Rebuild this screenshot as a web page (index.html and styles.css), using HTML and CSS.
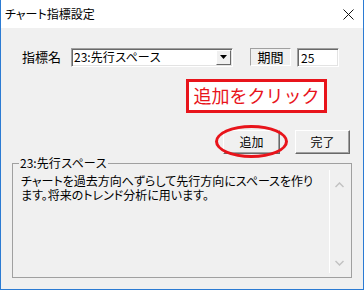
FILE: index.html
```html
<!DOCTYPE html>
<html lang="ja">
<head>
  <meta charset="UTF-8">
  <title>チャート指標設定</title>
  <link rel="stylesheet" href="styles.css">
</head>
<body>
  <div class="window">
    <div class="titlebar">
      <span class="title">チャート指標設定</span>
      <svg class="close" width="11" height="11" viewBox="0 0 11 11">
        <path d="M0.5 0.5 L10.5 10.5 M10.5 0.5 L0.5 10.5" stroke="#111" stroke-width="1" fill="none"/>
      </svg>
    </div>
    <div class="dialog">
      <div class="row-top">
        <span class="label">指標名</span>
        <div class="combo">
          <span class="combo-text">23:先行スペース</span>
          <span class="combo-btn">
            <svg width="7" height="4" viewBox="0 0 7 4"><path d="M0 0 H7 L3.5 4 Z" fill="#000"/></svg>
          </span>
        </div>
        <span class="period-label">期間</span>
        <div class="period-input">25</div>
      </div>
      <div class="callout-row">
        <div class="callout">追加をクリック</div>
      </div>
      <div class="button-row">
        <button class="btn btn-add">追加<span class="ring"></span></button>
        <button class="btn btn-done">完了</button>
      </div>
      <div class="group">
        <span class="group-title">23:先行スペース</span>
        <div class="memo">
          <p class="memo-text">チャートを過去方向へずらして先行方向にスペースを作り<br>ます。将来のトレンド分析に用います。</p>
          <div class="scrollbar">
            <svg width="9" height="6" viewBox="0 0 9 6"><path d="M0.5 5 L4.5 1 L8.5 5" stroke="#c2c2c2" stroke-width="1.5" fill="none"/></svg>
            <svg width="9" height="6" viewBox="0 0 9 6"><path d="M0.5 1 L4.5 5 L8.5 1" stroke="#c2c2c2" stroke-width="1.5" fill="none"/></svg>
          </div>
        </div>
      </div>
    </div>
  </div>
</body>
</html>
```

FILE: styles.css
```css
body {
  margin: 0;
  font-family: "Noto Sans CJK JP", "Noto Sans", sans-serif;
  color: #000;
}
.window {
  width: 364px;
  height: 290px;
  box-sizing: border-box;
  border: 1px solid #2b7bd3;
  border-top: none;
  background-color: #f0f0f0;
  display: flex;
  flex-direction: column;
}
.titlebar {
  height: 28px;
  background-color: #fff;
  display: flex;
  align-items: center;
  justify-content: space-between;
  padding: 0 9px 0 4px;
}
.title {
  font-size: 12px;
  line-height: 14px;
  font-feature-settings: "palt";
}
.close {
  display: block;
}
.dialog {
  padding: 19px 11px 0 11px;
}
.row-top {
  display: flex;
  align-items: center;
  height: 20px;
}
.label {
  flex-shrink: 0;
  white-space: nowrap;
  font-size: 13px;
  line-height: 16px;
  margin-left: 10px;
  width: 38px;
}
.combo {
  flex-shrink: 0;
  margin-left: 11px;
  width: 162px;
  height: 19px;
  box-sizing: border-box;
  background-color: #fff;
  border: 1px solid;
  border-color: #a0a0a0 #fff #fff #a0a0a0;
  box-shadow: inset 1px 1px 0 #696969, inset -1px -1px 0 #e3e3e3;
  display: flex;
  align-items: center;
  justify-content: space-between;
  padding: 0 1px 0 2px;
}
.combo-text {
  font-size: 12px;
  line-height: 14px;
}
.combo-btn {
  width: 15px;
  height: 15px;
  box-sizing: border-box;
  background-color: #f0f0f0;
  border: 1px solid;
  border-color: #fff #696969 #696969 #fff;
  display: flex;
  align-items: center;
  justify-content: center;
}
.combo-btn svg {
  display: block;
}
.period-label {
  flex-shrink: 0;
  margin-left: 17px;
  width: 41px;
  height: 18px;
  box-sizing: border-box;
  border: 1px solid;
  border-color: #a0a0a0 #fff #fff #a0a0a0;
  font-size: 13px;
  line-height: 16px;
  text-align: center;
}
.period-input {
  flex-shrink: 0;
  margin-left: 6px;
  width: 42px;
  height: 19px;
  box-sizing: border-box;
  background-color: #fff;
  border: 1px solid;
  border-color: #a0a0a0 #fff #fff #a0a0a0;
  box-shadow: inset 1px 1px 0 #696969, inset -1px -1px 0 #e3e3e3;
  font-size: 12px;
  line-height: 17px;
  padding-left: 3px;
}
.callout-row {
  display: flex;
  justify-content: flex-end;
  margin-top: 12px;
  padding-right: 25px;
}
.callout {
  width: 141px;
  height: 34px;
  box-sizing: border-box;
  border: 3px solid #e8141b;
  background-color: #fff;
  color: #e8141b;
  font-size: 18px;
  line-height: 27px;
  text-align: center;
}
.button-row {
  display: flex;
  justify-content: flex-end;
  gap: 15px;
  margin-top: 17px;
  padding-right: 2px;
}
.btn {
  position: relative;
  height: 24px;
  box-sizing: border-box;
  background-color: #f0f0f0;
  border: 1px solid;
  border-color: #fff #696969 #696969 #fff;
  box-shadow: inset -1px -1px 0 #a0a0a0;
  font-family: inherit;
  font-size: 12px;
  line-height: 20px;
  padding: 0;
  color: #000;
}
.btn-add {
  width: 57px;
}
.btn-done {
  width: 55px;
}
.ring {
  position: absolute;
  left: -9px;
  top: -6px;
  width: 73px;
  height: 33px;
  box-sizing: border-box;
  border: 3px solid #e8141b;
  border-radius: 50%;
}
.group {
  margin-top: 9px;
  height: 115px;
  box-sizing: border-box;
  border: 1px solid #a0a0a0;
  display: flex;
  flex-direction: column;
}
.group-title {
  align-self: flex-start;
  margin: -8px 0 0 6px;
  padding: 0 1px;
  background-color: #f0f0f0;
  font-size: 12px;
  line-height: 14px;
}
.memo {
  display: flex;
  justify-content: space-between;
  height: 103px;
}
.memo-text {
  margin: 5px 0 0 8px;
  font-family: "Liberation Sans", "Noto Sans CJK JP", sans-serif;
  font-size: 12px;
  line-height: 14px;
  font-feature-settings: "palt";
}
.scrollbar {
  width: 18px;
  margin-right: 3px;
  border-left: 1px solid #fff;
  display: flex;
  flex-direction: column;
  justify-content: space-between;
  align-items: center;
  padding: 12px 0 7px;
}
.scrollbar svg {
  display: block;
}
```
